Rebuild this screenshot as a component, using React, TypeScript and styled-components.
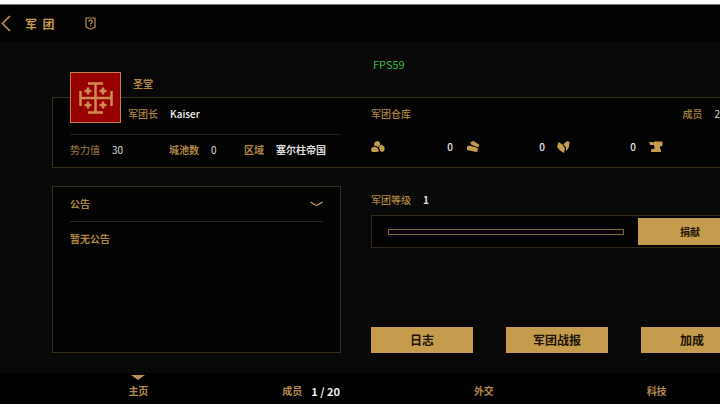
import React from "react";
import styled, { createGlobalStyle } from "styled-components";

const gold = "#c59b4d";
const dimGold = "#ae8542";
const line = "#392e19";

const GlobalStyle = createGlobalStyle`
  * { box-sizing: border-box; }
  body {
    margin: 0;
    background: #080808;
    color: ${dimGold};
    font: 500 10px/16px "Noto Sans CJK SC", sans-serif;
  }
  button {
    font: inherit;
    color: inherit;
    border: 0;
    padding: 0;
    background: none;
    cursor: pointer;
  }
  svg { display: block; }
  h1, h2, p, dl, dd, dt { margin: 0; font: inherit; }
`;

const Page = styled.div`
  display: flex;
  flex-direction: column;
  min-height: 100vh;
  overflow: hidden;
`;

const TopStrip = styled.div`
  height: 5px;
  background: #fff;
  border-bottom: 1px solid #777;
`;

const Header = styled.header`
  display: flex;
  align-items: center;
  height: 37px;
  padding-left: 1px;
  background: #030303;
  color: ${gold};
`;

const Title = styled.h1`
  margin: 0 31px 0 14px;
  font-size: 12px;
  font-weight: 700;
  white-space: pre;
`;

const Main = styled.main`
  flex: 1;
  margin: 0 -23px 0 52px;
  padding-bottom: 20px;
`;

const Columns = styled.div`
  display: grid;
  grid-template-columns: minmax(0, 289fr) minmax(0, 372fr);
  column-gap: 30px;
`;

const Heading = styled(Columns)`
  height: 55px;
`;

const GuildName = styled.h2`
  padding: 34px 0 0 81px;
  font-weight: 700;
`;

const Fps = styled.p`
  padding: 14px 0 0 2px;
  font-weight: 400;
  font-size: 11px;
  color: #35b845;
`;

const InfoPanel = styled(Columns)`
  position: relative;
  min-height: 71px;
  margin-bottom: 18px;
  background: #030303;
  box-shadow: inset 0 0 0 1px ${line};
`;

const Emblem = styled.div`
  position: absolute;
  left: 18px;
  top: -25px;
  width: 51px;
  height: 51px;
  border: 1px solid #bd8149;
  background: #960000;
`;

const Leader = styled.dl`
  display: flex;
  gap: 12px;
  height: 37px;
  padding: 9px 0 0 76px;
`;

const Value = styled.dd<{ $strong?: boolean }>`
  color: #dcdcdc;
  font-weight: ${(p) => (p.$strong ? 700 : 400)};
`;

const LeaderName = styled(Value)`
  color: #eee;
  font-weight: 500;
`;

const Stats = styled.div`
  display: grid;
  grid-template-columns: 99px 75px 1fr;
  margin-left: 18px;
  padding-top: 7px;
  border-top: 1px solid #26211a;
`;

const Stat = styled.dl<{ $tone?: "muted" | "bold" }>`
  display: flex;
  gap: 12px;
  color: ${(p) => (p.$tone === "muted" ? "#8c6b38" : dimGold)};
  font-weight: ${(p) => (p.$tone === "bold" ? 700 : 500)};
`;

const StorageHead = styled.div`
  display: flex;
  justify-content: space-between;
  padding: 9px 23px 0 0;
`;

const Resources = styled.ul`
  display: grid;
  grid-template-columns: 86px 84px 83px 1fr;
  column-gap: 8px;
  margin: 17px 0 0;
  padding: 0;
  list-style: none;
`;

const Resource = styled.li`
  display: flex;
  align-items: center;
  justify-content: space-between;
  padding-right: 4px;
  color: #e6e6e6;
`;

const Notice = styled.section`
  min-height: 167px;
  padding: 0 17px;
  border: 1px solid ${line};
  background: #030303;
  font-weight: 700;
`;

const NoticeHead = styled.div`
  display: flex;
  align-items: center;
  justify-content: space-between;
  height: 35px;
  border-bottom: 1px solid #2d271c;
`;

const NoticeText = styled.p`
  padding-top: 9px;
`;

const Side = styled.section`
  display: flex;
  flex-direction: column;
`;

const Level = styled.dl`
  display: flex;
  gap: 12px;
  padding: 6px 0 7px;
`;

const Donation = styled.div`
  display: flex;
  align-items: center;
  gap: 14px;
  height: 33px;
  padding-left: 16px;
  border: 1px solid #34281a;
  background: #030303;
`;

const Track = styled.div`
  flex: 1;
  height: 6px;
  border: 1px solid #80653a;
`;

const GoldButton = styled.button<{ $small?: boolean }>`
  width: ${(p) => (p.$small ? "104px" : "auto")};
  height: ${(p) => (p.$small ? "27px" : "26px")};
  background: ${gold};
  color: #201407;
  font-size: ${(p) => (p.$small ? "10px" : "12px")};
  font-weight: 700;
`;

const Actions = styled.div`
  display: grid;
  grid-template-columns: repeat(3, 1fr);
  column-gap: 33px;
  margin-top: auto;
`;

const Tabs = styled.nav`
  display: grid;
  grid-template-columns: repeat(4, 1fr);
  padding-left: 52px;
  margin-right: -23px;
  background: #000;
`;

const Tab = styled.button`
  display: flex;
  flex-direction: column;
  align-items: center;
  height: 31px;
  padding-top: 2px;
  color: #b38a4b;
  font-weight: 700;
`;

const Marker = styled.span<{ $active?: boolean }>`
  height: 5px;
  margin-bottom: 3px;
  border: solid transparent;
  border-width: 5px 7px 0;
  border-top-color: ${(p) => (p.$active ? "#bd9150" : "transparent")};
`;

const TabText = styled.span`
  display: flex;
  gap: 9px;
`;

const Count = styled.span`
  color: #eee;
  font-size: 11px;
`;

const CrossIcon = () => (
  <svg width="49" height="49" viewBox="0 0 49 49" fill="none" stroke="#d08b50" aria-hidden="true">
    <path strokeWidth="2.500" d="M24.500 10v30M9 25h31M17 10.500h15M17 39.500h15M9.500 18v15M40.500 18v15" />
    <path strokeWidth="2.600" d="M17 14.500v7M13.500 18h7M32 14.500v7M28.500 18h7M17 28.500v7M13.500 32h7M32 28.500v7M28.500 32h7" />
  </svg>
);

const BackIcon = () => (
  <svg width="10" height="17" viewBox="0 0 10 17" fill="none" stroke={gold} strokeWidth="1.500" aria-hidden="true">
    <path d="M9 1 1.500 8.500 9 16" />
  </svg>
);

const HelpIcon = () => (
  <svg width="11" height="13" viewBox="0 0 11 13" fill="none" stroke="#b88f51" aria-hidden="true">
    <path strokeWidth="1.200" d="M1 1h9v9l-4.500 2.200L1 10z" />
    <path strokeWidth="1.200" d="M3.800 4.700c0-2 3.500-2 3.500 0 0 1.300-1.700 1.200-1.700 2.600M5.600 8.300v1.100" />
  </svg>
);

const ChevronIcon = () => (
  <svg width="13" height="6" viewBox="0 0 13 6" fill="none" stroke={gold} strokeWidth="1.300" aria-hidden="true">
    <path d="M.5 1Q4 3.500 6.500 4.500 9 3.500 12.500 1" />
  </svg>
);

const resourceIcons: Record<string, React.ReactNode> = {
  粮食: (
    <>
      <path d="M3 5 4.500 2.500 7 2l2 1.500V5.500L7.500 8 3.500 6.800z" />
      <path d="M8 7 10.500 5.500l3 2.500v3.500L11.500 13 9 12z" />
      <path d="M.5 9 3 7.500 6.500 9l1.500 3.500L5 13H1L0 11z" />
    </>
  ),
  木材: (
    <>
      <path d="M5.500 3 8.500 2 14 5.500V7.500l-2 .5L6 5.500z" />
      <path d="M2 7.500 4 6.500l9 2.500-.5 3.500-1.500.5-9-2z" />
    </>
  ),
  石料: (
    <>
      <path d="M1.500 3 5.500 5.500 8 9.500l-1 4.500L3 11.500 0 8z" />
      <path d="M7 4.500 10.500 2 12.500 3 12 8l-3 4.500V8.500L6.500 5.500z" />
    </>
  ),
  铁矿: <path d="M1 3h4l1 1V2.500h8.500V7L12 7.500V10l1 .5V13H3v-2.500L6.500 9.500 6 6H2V5z" />,
};

const ResourceIcon = ({ name }: { name: string }) => (
  <svg width="16" height="16" viewBox="0 0 16 16" fill={gold} role="img" aria-label={name}>
    {resourceIcons[name]}
  </svg>
);

const resources = [
  { name: "粮食", amount: "0" },
  { name: "木材", amount: "0" },
  { name: "石料", amount: "0" },
  { name: "铁矿", amount: "" },
];

const tabs = [
  { label: "主页", active: true },
  { label: "成员", count: "1 / 20" },
  { label: "外交" },
  { label: "科技" },
];

export default function App() {
  return (
    <Page>
      <GlobalStyle />
      <TopStrip />
      <Header>
        <button aria-label="返回"><BackIcon /></button>
        <Title>{"军  团"}</Title>
        <button aria-label="帮助"><HelpIcon /></button>
      </Header>
      <Main>
        <Heading>
          <GuildName>圣堂</GuildName>
          <Fps>FPS59</Fps>
        </Heading>
        <InfoPanel>
          <Emblem><CrossIcon /></Emblem>
          <div>
            <Leader>
              <dt>军团长</dt>
              <LeaderName>Kaiser</LeaderName>
            </Leader>
            <Stats>
              <Stat $tone="muted"><dt>势力值</dt><Value>30</Value></Stat>
              <Stat $tone="bold"><dt>城池数</dt><Value>0</Value></Stat>
              <Stat $tone="bold"><dt>区域</dt><Value $strong>塞尔柱帝国</Value></Stat>
            </Stats>
          </div>
          <div>
            <StorageHead>
              <h2>军团仓库</h2>
              <Stat><dt>成员</dt><Value>2</Value></Stat>
            </StorageHead>
            <Resources>
              {resources.map((r) => (
                <Resource key={r.name}>
                  <ResourceIcon name={r.name} />
                  {r.amount}
                </Resource>
              ))}
            </Resources>
          </div>
        </InfoPanel>
        <Columns>
          <Notice>
            <NoticeHead>
              <h2>公告</h2>
              <button aria-label="展开公告"><ChevronIcon /></button>
            </NoticeHead>
            <NoticeText>暂无公告</NoticeText>
          </Notice>
          <Side>
            <Level>
              <dt>军团等级</dt>
              <Value $strong>1</Value>
            </Level>
            <Donation>
              <Track role="progressbar" aria-label="军团等级" aria-valuenow={0} />
              <GoldButton $small>捐献</GoldButton>
            </Donation>
            <Actions>
              <GoldButton>日志</GoldButton>
              <GoldButton>军团战报</GoldButton>
              <GoldButton>加成</GoldButton>
            </Actions>
          </Side>
        </Columns>
      </Main>
      <Tabs>
        {tabs.map((t) => (
          <Tab key={t.label} aria-current={t.active ? "page" : undefined}>
            <Marker $active={t.active} />
            <TabText>
              {t.label}
              {t.count && <Count>{t.count}</Count>}
            </TabText>
          </Tab>
        ))}
      </Tabs>
    </Page>
  );
}
